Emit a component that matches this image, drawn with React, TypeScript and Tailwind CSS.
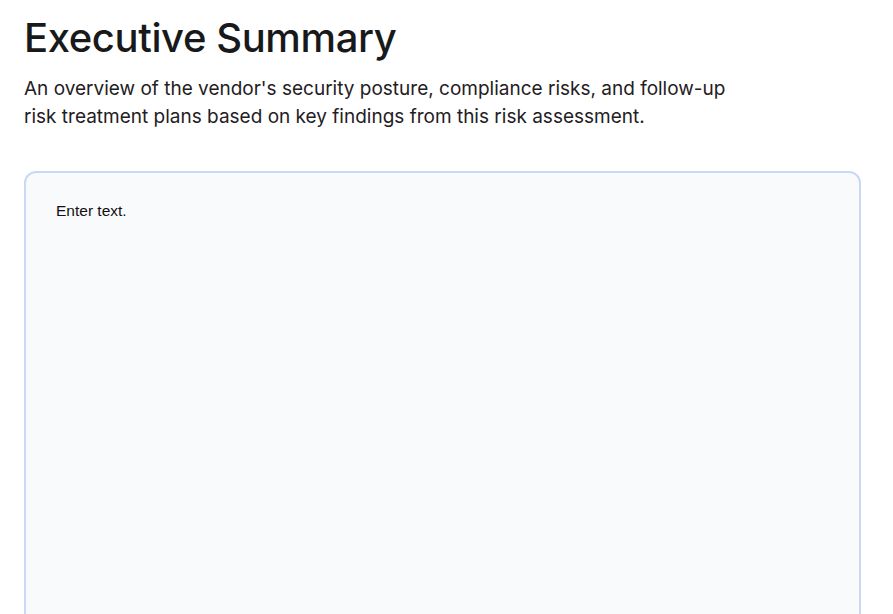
export default function App() {
  return (
    <main className="min-h-screen bg-white pl-6 pr-8 pt-3" style={{ fontFamily: "Inter, 'Noto Sans', sans-serif" }}>
      {/* Header */}
      <h1 className="text-[40px] font-medium leading-[52px] tracking-[-0.01em] text-[#18191b]">
        Executive Summary
      </h1>
      <p className="mt-[11px] max-w-[720px] text-[19px] leading-[28px] text-[#1f2023]">
        An overview of the vendor's security posture, compliance risks, and follow-up risk treatment plans based on key findings from this risk assessment.
      </p>

      {/* Editor */}
      <div className="mt-[40px] h-[480px] rounded-xl border-2 border-[#c9d9f3] bg-[#f9fafc] px-[30px] py-[28px]">
        <div
          className="text-[15.5px] leading-[20px] text-[#111]"
          style={{ fontFamily: "'Liberation Sans', Arial, sans-serif" }}
        >
          Enter text.
        </div>
      </div>
    </main>
  );
}
